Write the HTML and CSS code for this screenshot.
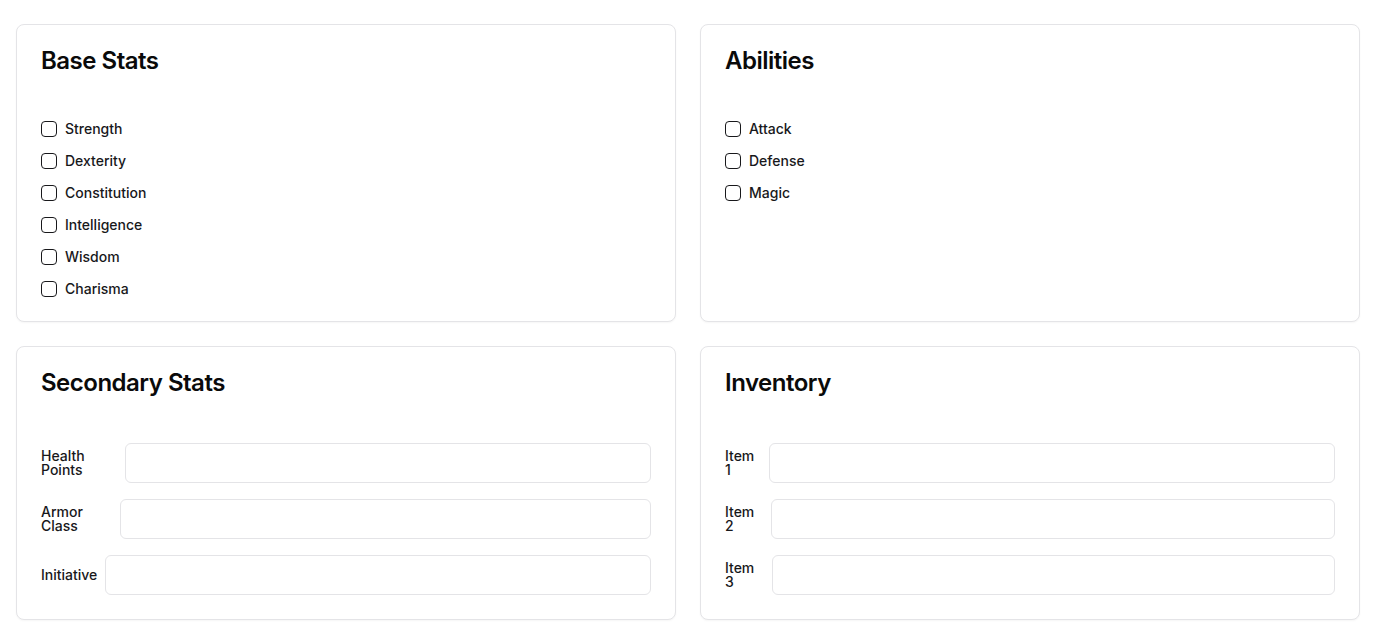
FILE: index.html
```html
<!DOCTYPE html>
<html lang="en">
<head>
<meta charset="utf-8">
<title>Character Sheet</title>
<link rel="stylesheet" href="styles.css">
</head>
<body>
<main class="grid">
  <section class="card">
    <h2 class="card-title">Base Stats</h2>
    <div class="checks">
      <label class="check"><input type="checkbox"><span>Strength</span></label>
      <label class="check"><input type="checkbox"><span>Dexterity</span></label>
      <label class="check"><input type="checkbox"><span>Constitution</span></label>
      <label class="check"><input type="checkbox"><span>Intelligence</span></label>
      <label class="check"><input type="checkbox"><span>Wisdom</span></label>
      <label class="check"><input type="checkbox"><span>Charisma</span></label>
    </div>
  </section>
  <section class="card">
    <h2 class="card-title">Abilities</h2>
    <div class="checks">
      <label class="check"><input type="checkbox"><span>Attack</span></label>
      <label class="check"><input type="checkbox"><span>Defense</span></label>
      <label class="check"><input type="checkbox"><span>Magic</span></label>
    </div>
  </section>
  <section class="card">
    <h2 class="card-title">Secondary Stats</h2>
    <div class="fields">
      <div class="field"><label class="field-label" for="hp">Health Points</label><input id="hp" class="input" type="text"></div>
      <div class="field"><label class="field-label" for="ac">Armor Class</label><input id="ac" class="input" type="text"></div>
      <div class="field"><label class="field-label" for="ini">Initiative</label><input id="ini" class="input" type="text"></div>
    </div>
  </section>
  <section class="card">
    <h2 class="card-title">Inventory</h2>
    <div class="fields">
      <div class="field"><label class="field-label" for="i1">Item 1</label><input id="i1" class="input" type="text"></div>
      <div class="field"><label class="field-label" for="i2">Item 2</label><input id="i2" class="input" type="text"></div>
      <div class="field"><label class="field-label" for="i3">Item 3</label><input id="i3" class="input" type="text"></div>
    </div>
  </section>
</main>
</body>
</html>
```
FILE: styles.css
```css
* { box-sizing: border-box; }
html, body { margin: 0; padding: 0; background: #ffffff; }
body {
  font-family: Inter, "Noto Sans", sans-serif;
  color: #0a0a0a;
}
.grid {
  display: grid;
  grid-template-columns: 1fr 1fr;
  gap: 24px;
  padding: 24px 16px;
}
.card {
  border: 1px solid #e4e4e7;
  border-radius: 8px;
  background: #fff;
  box-shadow: 0 1px 2px rgba(0,0,0,0.04);
  padding: 24px;
  display: flex;
  flex-direction: column;
}
.card-title {
  margin: 0;
  font-size: 24px;
  line-height: 24px;
  font-weight: 600;
  letter-spacing: -0.5px;
}
.checks {
  margin-top: 48px;
  display: flex;
  flex-direction: column;
  gap: 16px;
}
.check {
  display: flex;
  align-items: center;
  gap: 8px;
  height: 16px;
  font-size: 14px;
  font-weight: 500;
  line-height: 1;
  color: #18181b;
}
.check input {
  appearance: none;
  -webkit-appearance: none;
  margin: 0;
  width: 16px;
  height: 16px;
  border: 1px solid #18181b;
  border-radius: 4px;
  background: #fff;
  flex: none;
}
.fields {
  margin-top: 48px;
  display: flex;
  flex-direction: column;
  gap: 16px;
}
.field {
  display: flex;
  align-items: center;
  gap: 8px;
}
.field-label {
  font-size: 14px;
  font-weight: 500;
  line-height: 1;
  color: #18181b;
}
.input {
  width: 100%;
  height: 40px;
  margin: 0;
  border: 1px solid #e4e4e7;
  border-radius: 6px;
  background: #fff;
  padding: 8px 12px;
  font: inherit;
  font-size: 14px;
}
```
